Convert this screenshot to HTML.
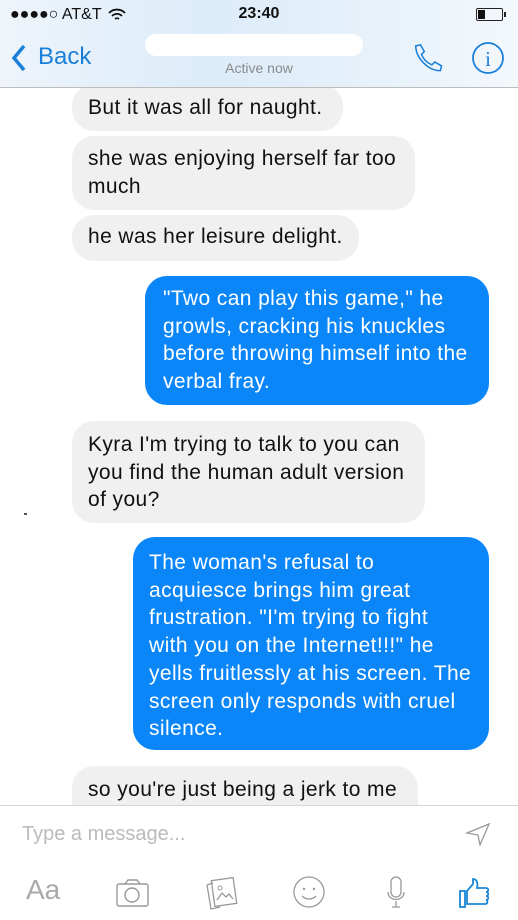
<!DOCTYPE html>
<html><head><meta charset="utf-8"><style>
*{margin:0;padding:0;box-sizing:border-box}
body{width:518px;height:920px;overflow:hidden;background:#fff;font-family:"Liberation Sans",Arial,sans-serif;position:relative}
.hdr{position:absolute;left:0;top:0;width:518px;height:88px;background:linear-gradient(90deg,#eef4fa 0%,#dcecf9 40%,#e6f1fa 70%,#f3f8fc 100%);border-bottom:1px solid #bdbdbd;z-index:2}
.b{position:absolute;border-radius:22px;font-size:21px;letter-spacing:0.4px;line-height:27.7px;padding:0 16px;white-space:nowrap}
.g{background:#f0f0f0;color:#111;left:72px}
.u{background:#0b86f9;color:#fff;right:29px;padding-left:16px}
.bar{position:absolute;left:0;top:805px;width:518px;height:115px;background:#fff;border-top:1px solid #d6d6d6;z-index:2}
</style></head><body>
<div class="hdr">
 <div style="position:absolute;left:10px;top:6px;font-size:16px;color:#111">●●●●○ AT&amp;T</div>
 <svg style="position:absolute;left:108px;top:8px" width="18" height="14" viewBox="0 0 18 14"><path d="M1 5a11 11 0 0 1 16 0M4 8a7 7 0 0 1 10 0M7 11a3 3 0 0 1 4 0" stroke="#111" stroke-width="1.8" fill="none"/></svg>
 <div style="position:absolute;left:0;width:518px;top:5px;text-align:center;font-size:16px;font-weight:bold;color:#111">23:40</div>
 <div style="position:absolute;left:476px;top:8px;width:27px;height:13px;border:1px solid #222;border-radius:2px"><div style="width:7px;height:9px;background:#111;margin:1px"></div></div>
 <div style="position:absolute;left:504px;top:12px;width:2px;height:5px;background:#222"></div>
 <svg style="position:absolute;left:11px;top:44px" width="16" height="28" viewBox="0 0 16 28"><path d="M13 2L3 14l10 12" stroke="#1a7fd9" stroke-width="3.5" fill="none"/></svg>
 <div style="position:absolute;left:38px;top:43px;font-size:24px;color:#1a7fd9">Back</div>
 <div style="position:absolute;left:145px;top:34px;width:218px;height:22px;background:#fff;border-radius:11px"></div>
 <div style="position:absolute;left:0;width:518px;top:60px;text-align:center;font-size:14px;color:#8a8a8a">Active now</div>
 <svg style="position:absolute;left:413px;top:43px" width="32" height="30" viewBox="0 0 32 30"><path d="M5 3l5-1 4 7-3 3c2 5 6 9 11 11l3-3 7 4-1 5c-12 1-26-13-26-26z" stroke="#1a7fd9" stroke-width="1.6" fill="none" transform="translate(-2,0) scale(0.95)"/></svg>
 <svg style="position:absolute;left:471px;top:41px" width="34" height="34" viewBox="0 0 34 34"><circle cx="17" cy="17" r="15" stroke="#1a7fd9" stroke-width="1.8" fill="none"/><text x="17" y="25" text-anchor="middle" font-family="Liberation Serif" font-size="21" fill="#1a7fd9">i</text></svg>
</div>
<div class="b g" style="top:84px;width:271px;height:47px;padding-top:10px">But it was all for naught.</div>
<div class="b g" style="top:136px;width:343px;height:74px;padding-top:9px">she was enjoying herself far too<br>much</div>
<div class="b g" style="top:215px;width:287px;height:46px;padding-top:8px">he was her leisure delight.</div>
<div class="b u" style="top:276px;width:344px;height:129px;padding-top:9px;padding-left:18px">"Two can play this game," he<br>growls, cracking his knuckles<br>before throwing himself into the<br>verbal fray.</div>
<div class="b g" style="top:421px;width:353px;height:102px;padding-top:10px">Kyra I'm trying to talk to you can<br>you find the human adult version<br>of you?</div>
<div style="position:absolute;left:24px;top:513px;width:3px;height:2px;background:#555"></div>
<div class="b u" style="top:537px;width:356px;height:213px;padding-top:12px">The woman's refusal to<br>acquiesce brings him great<br>frustration. "I'm trying to fight<br>with you on the Internet!!!" he<br>yells fruitlessly at his screen. The<br>screen only responds with cruel<br>silence.</div>
<div class="b g" style="top:766px;width:346px;height:60px;padding-top:10px">so you're just being a jerk to me</div>
<div class="bar">
 <div style="position:absolute;left:22px;top:17px;font-size:20px;color:#bbb">Type a message...</div>
 <svg style="position:absolute;left:465px;top:16px" width="26" height="24" viewBox="0 0 26 24"><path d="M2 11L24 2 15 23 13 13z" stroke="#999" stroke-width="1.3" fill="none"/></svg>
 <div style="position:absolute;left:26px;top:68px;font-size:28px;color:#aaa">Aa</div>
 <svg style="position:absolute;left:115px;top:72px" width="36" height="30" viewBox="0 0 36 30"><rect x="2" y="6" width="31" height="22" rx="2" stroke="#999" stroke-width="1.4" fill="none"/><path d="M10 6l3-4h9l3 4" stroke="#999" stroke-width="1.4" fill="none"/><circle cx="17" cy="17" r="7" stroke="#999" stroke-width="1.4" fill="none"/></svg>
 <svg style="position:absolute;left:204px;top:70px" width="34" height="36" viewBox="0 0 34 36"><path d="M3 9l6-2M3 9l4 24 9-2" stroke="#999" stroke-width="1.3" fill="none"/><rect x="9" y="3" width="22" height="26" stroke="#999" stroke-width="1.3" fill="none" transform="rotate(-8 20 16)"/><path d="M13 24l5-7 4 4 3-3 4 5" stroke="#999" stroke-width="1.3" fill="none"/><circle cx="16" cy="12" r="2" stroke="#999" fill="none"/></svg>
 <svg style="position:absolute;left:292px;top:69px" width="34" height="34" viewBox="0 0 34 34"><circle cx="17" cy="17" r="15" stroke="#999" stroke-width="1.3" fill="none"/><circle cx="12" cy="14" r="1.2" fill="#999"/><circle cx="22" cy="14" r="1.2" fill="#999"/><path d="M10 21c4 4 10 4 14 0" stroke="#999" stroke-width="1.3" fill="none"/></svg>
 <svg style="position:absolute;left:386px;top:70px" width="20" height="34" viewBox="0 0 20 34"><rect x="5" y="1" width="10" height="20" rx="5" stroke="#999" stroke-width="1.3" fill="none"/><path d="M2 16c0 10 16 10 16 0M10 25v6M6 31h8" stroke="#999" stroke-width="1.3" fill="none"/></svg>
 <svg style="position:absolute;left:458px;top:71px" width="32" height="32" viewBox="0 0 32 32"><rect x="2" y="14" width="5" height="16" stroke="#1a86d6" stroke-width="1.8" fill="none"/><path d="M9 14l6-7V2c4 0 5 4 4 9h9c3 0 3 4 0 4 3 0 3 4 0 4 3 0 3 4 0 4 2 0 2 4-1 4H9z" stroke="#1a86d6" stroke-width="1.8" fill="none"/></svg>
</div>
</body></html>
